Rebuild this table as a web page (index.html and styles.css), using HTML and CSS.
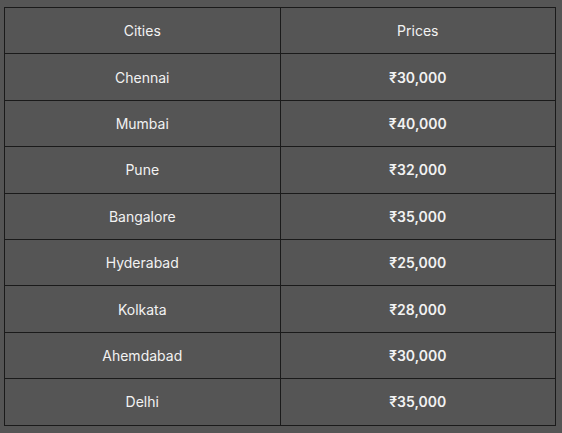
FILE: index.html
```html
<!DOCTYPE html>
<html>
<head>
<meta charset="utf-8">
<link rel="stylesheet" href="styles.css">
</head>
<body>
<table class="price-table">
  <thead>
    <tr><th>Cities</th><th>Prices</th></tr>
  </thead>
  <tbody>
    <tr><td>Chennai</td><td class="price">₹30,000</td></tr>
    <tr><td>Mumbai</td><td class="price">₹40,000</td></tr>
    <tr><td>Pune</td><td class="price">₹32,000</td></tr>
    <tr><td>Bangalore</td><td class="price">₹35,000</td></tr>
    <tr><td>Hyderabad</td><td class="price">₹25,000</td></tr>
    <tr><td>Kolkata</td><td class="price">₹28,000</td></tr>
    <tr><td>Ahemdabad</td><td class="price">₹30,000</td></tr>
    <tr><td>Delhi</td><td class="price">₹35,000</td></tr>
  </tbody>
</table>
</body>
</html>
```
FILE: styles.css
```css
html, body {
  margin: 0;
  background: #555555;
}
body {
  padding: 7px 0 0 4px;
  font-family: "Inter", "Noto Sans", sans-serif;
  color: #f2f2f2;
}
.price-table {
  width: 552px;
  border-collapse: collapse;
  table-layout: fixed;
}
.price-table th,
.price-table td {
  border: 1px solid #1a1a1a;
  height: 45.4px;
  padding: 0;
  text-align: center;
  vertical-align: middle;
  font-size: 14px;
  font-weight: 400;
}
.price-table .price {
  font-weight: 600;
}
```
